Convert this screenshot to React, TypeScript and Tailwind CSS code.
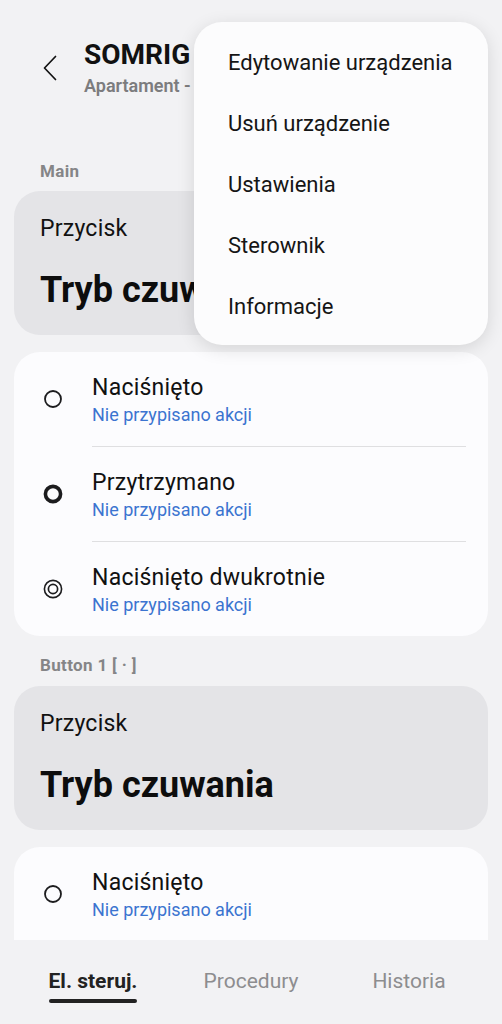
import { ReactNode } from "react"

const menuItems = ["Edytowanie urządzenia", "Usuń urządzenie", "Ustawienia", "Sterownik", "Informacje"]

type Kind = "press" | "hold" | "double"

const actions: { kind: Kind; title: string }[] = [
    { kind: "press", title: "Naciśnięto" },
    { kind: "hold", title: "Przytrzymano" },
    { kind: "double", title: "Naciśnięto dwukrotnie" },
]

function ActionIcon({ kind }: { kind: Kind }) {
    return (
        <svg width="20" height="20" viewBox="0 0 20 20" fill="none" stroke="#1c1c1e">
            {kind === "press" && <circle cx="10" cy="10" r="8" strokeWidth="1.8" />}
            {kind === "hold" && <circle cx="10" cy="10" r="7.6" strokeWidth="3.6" />}
            {kind === "double" && (
                <>
                    <circle cx="10" cy="10" r="8.6" strokeWidth="1.6" />
                    <circle cx="10" cy="10" r="4.6" strokeWidth="1.7" />
                </>
            )}
        </svg>
    )
}

function ActionRow({ kind, title }: { kind: Kind; title: string }) {
    return (
        <div className="flex items-center h-[94px]">
            <div className="w-[78px] pl-[29px] flex items-center">
                <ActionIcon kind={kind} />
            </div>
            <div className="flex flex-col pt-[1px]">
                <span className="text-[23px] leading-[28px] tracking-[0.01em] text-[#111]">{title}</span>
                <span className="mt-[2px] text-[18px] leading-[22px] text-[#3b74d0]">Nie przypisano akcji</span>
            </div>
        </div>
    )
}

function SectionLabel({ children, className }: { children: ReactNode; className?: string }) {
    return (
        <div className={"pl-[26px] text-[17px] leading-[20px] tracking-[0.02em] font-bold text-[#858587] " + (className ?? "")}>
            {children}
        </div>
    )
}

function StatusCard() {
    return (
        <div className="h-[144px] rounded-[26px] bg-[#e4e4e7] pl-[26px] pt-[24px]">
            <div className="text-[23px] leading-[28px] tracking-[0.01em] text-[#111]">Przycisk</div>
            <div className="mt-[27px] text-[36px] leading-[40px] font-bold text-[#0d0d0d]">Tryb czuwania</div>
        </div>
    )
}

export default function App() {
    return (
        <div
            className="relative h-[1024px] w-full flex flex-col overflow-hidden bg-[#f2f2f4]"
            style={{ fontFamily: "Roboto, 'Noto Sans', sans-serif" }}
        >
            <div className="flex-1 overflow-hidden">
                {/* Header */}
                <div className="flex items-center pt-[38px] pl-[43px]">
                    <svg width="14" height="26" viewBox="0 0 14 26" fill="none" stroke="#111" strokeWidth="1.7" strokeLinecap="round" strokeLinejoin="round">
                        <path d="M12.5 1.5 L1.5 13 L12.5 24.5" />
                    </svg>
                    <div className="ml-[27px] flex flex-col">
                        <span className="text-[28px] leading-[34px] font-bold text-[#111] whitespace-nowrap">SOMRIG przycisk</span>
                        <span className="mt-[3px] text-[18px] leading-[22px] font-semibold text-[#7c7c7e] whitespace-nowrap">Apartament - Salon</span>
                    </div>
                </div>

                <div className="px-[14px]">
                    <SectionLabel className="mt-[64px] mb-[10px]">Main</SectionLabel>
                    <StatusCard />

                    <div className="mt-[17px] rounded-[26px] bg-[#fcfcfe]">
                        {actions.map((a, i) => (
                            <div key={a.title}>
                                {i > 0 && <div className="ml-[78px] mr-[22px] h-px bg-[#dfdfe1]" />}
                                <ActionRow kind={a.kind} title={a.title} />
                            </div>
                        ))}
                    </div>

                    <SectionLabel className="mt-[19px] mb-[11px]">Button 1 [ · ]</SectionLabel>
                    <StatusCard />

                    <div className="mt-[17px] rounded-t-[26px] bg-[#fcfcfe]">
                        <ActionRow kind="press" title="Naciśnięto" />
                    </div>
                </div>
            </div>

            {/* Bottom tabs */}
            <div className="h-[84px] shrink-0 grid grid-cols-3 px-[14px] bg-[#f2f2f4]">
                <div className="flex justify-center pt-[28px]">
                    <div className="flex flex-col items-center">
                        <span className="text-[21px] leading-[26px] font-bold text-[#222]">El. steruj.</span>
                        <div className="mt-[5px] h-[4px] w-full rounded-full bg-[#222]" />
                    </div>
                </div>
                <div className="flex justify-center pt-[28px]">
                    <span className="text-[21px] leading-[26px] text-[#8d8d8f]">Procedury</span>
                </div>
                <div className="flex justify-center pt-[28px]">
                    <span className="text-[21px] leading-[26px] text-[#8d8d8f]">Historia</span>
                </div>
            </div>

            {/* Overflow menu */}
            <div className="absolute top-[22px] left-[194px] w-[294px] rounded-[28px] bg-[#fcfcfd] pt-[10px] pb-[8px] shadow-[0_4px_18px_rgba(0,0,0,0.12)]">
                {menuItems.map((item) => (
                    <div key={item} className="h-[61px] flex items-center pl-[34px] text-[22px] leading-[28px] text-[#151515]">
                        {item}
                    </div>
                ))}
            </div>
        </div>
    )
}
